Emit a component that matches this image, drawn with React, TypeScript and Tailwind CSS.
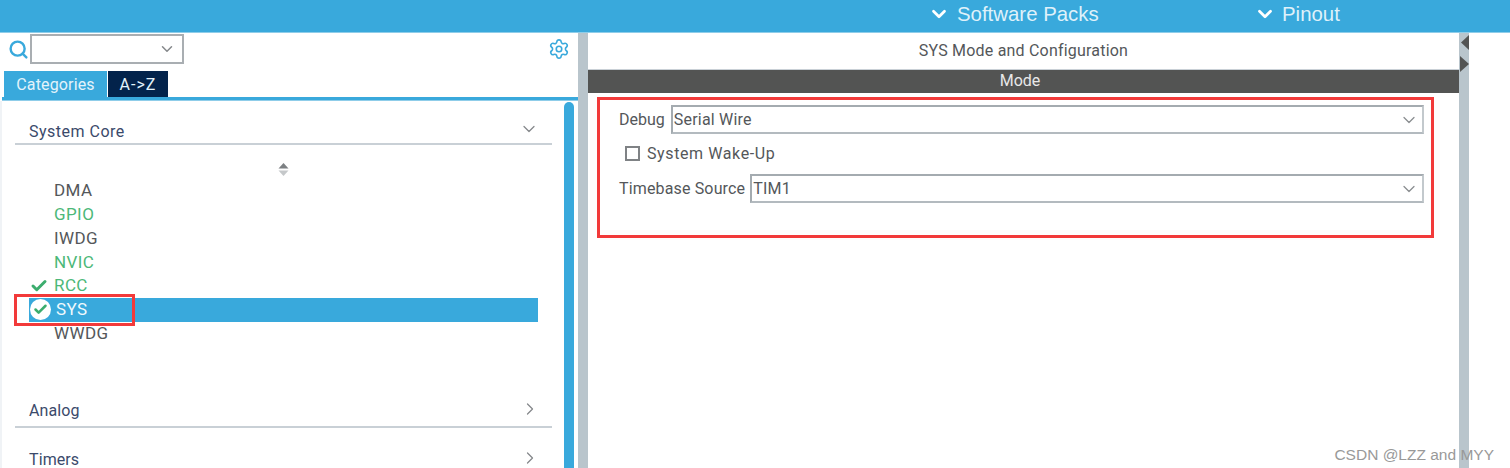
import React from 'react';
import { ChevronDown, ChevronRight, Search, Settings, Check } from 'lucide-react';

const ITEMS = [
  { name: 'DMA', color: 'text-[#54575a]' },
  { name: 'GPIO', color: 'text-[#4cb878]' },
  { name: 'IWDG', color: 'text-[#54575a]' },
  { name: 'NVIC', color: 'text-[#4cb878]' },
  { name: 'RCC', color: 'text-[#4cb878]', check: true },
  { name: 'SYS', selected: true },
  { name: 'WWDG', color: 'text-[#54575a]' },
];

const Select: React.FC<{ value: string }> = ({ value }) => (
  <div className="flex h-[29px] flex-1 items-center justify-between border-2 border-t-[#a4abb0] border-l-[#a4abb0] border-r-[#c3c9cd] border-b-[#b3babf] pl-[1px] pr-[3px]">
    <span className="pt-[1px] text-[16px] tracking-[0.2px] text-[#54575a]">{value}</span>
    <ChevronDown className="h-[20px] w-[20px] text-[#8a8d90]" strokeWidth={1.5} />
  </div>
);

const App: React.FC = () => {
  return (
    <div className="relative flex h-[468px] w-[1510px] flex-col overflow-hidden bg-white font-['Roboto',sans-serif]">
      {/* Top bar */}
      <header className="flex h-[33px] shrink-0 items-center border-b border-[#8fcde9] bg-[#39a9dc] pb-[4px] pl-[928px] font-['Liberation_Sans',sans-serif] text-[20.4px] text-[#dff1fa]">
        <ChevronDown className="h-[22px] w-[22px] text-white" strokeWidth={3} />
        <span className="ml-[7px] w-[297px]">Software Packs</span>
        <ChevronDown className="h-[22px] w-[22px] text-white" strokeWidth={3} />
        <span className="ml-[6px]">Pinout</span>
      </header>

      <div className="flex min-h-0 flex-1">
        {/* Left panel */}
        <aside className="flex w-[578px] shrink-0 flex-col overflow-hidden">
          <div className="flex h-[32px] shrink-0 items-center pl-[8px] pr-[8px]">
            <Search className="h-[21px] w-[21px] text-[#39a9dc]" strokeWidth={2.75} />
            <div className="ml-[1px] flex h-[30px] w-[154px] items-center justify-end border-2 border-[#a9aeb2] pr-[6px]">
              <ChevronDown className="h-[18px] w-[18px] text-[#85888b]" strokeWidth={2} />
            </div>
            <Settings className="ml-auto h-[22px] w-[22px] text-[#39a9dc]" strokeWidth={1.75} />
          </div>

          <div className="ml-[4px] mt-[6px] flex h-[26px] shrink-0 text-[16px] text-[#e3f3fb]">
            <div className="flex w-[103px] items-center justify-center bg-[#39a9dc] pt-[1px] tracking-[0.15px]">Categories</div>
            <div className="ml-[1px] flex w-[60px] items-center justify-center bg-[#03234b] pt-[1px] tracking-[1px]">A-&gt;Z</div>
          </div>
          <div className="ml-[2px] h-[4px] shrink-0 border-b border-[#8fcde9] bg-[#39a9dc]" />

          <div className="flex min-h-0 flex-1 border-l-2 border-[#f0f3f6]">
            <div className="min-w-0 flex-1 pl-[13px] pr-[12px] pt-[17px]">
              <div className="flex h-[27px] items-center justify-between border-b-2 border-[#c9d0d6] pl-[14px] pr-[13px]">
                <span className="pt-[3px] text-[16px] tracking-[0.5px] text-[#3b4a6b]">System Core</span>
                <ChevronDown className="mb-[4px] h-[20px] w-[20px] text-[#85888b]" strokeWidth={1.5} />
              </div>

              <div className="flex h-[32px] items-end justify-center">
                <svg width="11" height="15" viewBox="0 0 11 15">
                  <path d="M5.5 1 L10.5 6.5 H0.5 Z" fill="#7d8083" />
                  <path d="M5.5 14 L10.5 8.5 H0.5 Z" fill="#c5c8ca" />
                </svg>
              </div>

              <ul className="mt-[2px] w-[523px] pl-[14px] text-[17px] tracking-[0.4px]">
                {ITEMS.map((item) =>
                  item.selected ? (
                    <li key={item.name} className="flex h-[24px] items-center bg-[#39a9dc] text-[#f0f9fd]">
                      <span className="ml-[1px] flex h-[21px] w-[21px] items-center justify-center rounded-full bg-white">
                        <Check className="h-[15px] w-[15px] text-[#3cad6e]" strokeWidth={4} />
                      </span>
                      <span className="ml-[5px]">{item.name}</span>
                    </li>
                  ) : (
                    <li key={item.name} className={`flex h-[23.8px] items-center ${item.color}`}>
                      <span className="flex w-[25px] justify-center pr-[5px]">
                        {item.check && <Check className="h-[18px] w-[18px] text-[#3cad6e]" strokeWidth={4} />}
                      </span>
                      <span>{item.name}</span>
                    </li>
                  ),
                )}
              </ul>

              <div className="mt-[50px] flex h-[32px] items-center justify-between border-b-2 border-[#c9d0d6] pl-[14px] pr-[12px]">
                <span className="text-[16px] tracking-[0.1px] text-[#3b4a6b]">Analog</span>
                <ChevronRight className="mb-[4px] h-[20px] w-[20px] text-[#85888b]" strokeWidth={1.5} />
              </div>
              <div className="mt-[16px] flex h-[32px] items-center justify-between pl-[14px] pr-[12px]">
                <span className="text-[16px] tracking-[0.1px] text-[#3b4a6b]">Timers</span>
                <ChevronRight className="mb-[4px] h-[20px] w-[20px] text-[#85888b]" strokeWidth={1.5} />
              </div>
            </div>
            <div className="mr-[4px] mt-[1px] w-[10px] shrink-0 rounded-t-[5px] bg-[#39a9dc]" />
          </div>
        </aside>

        <div className="w-[10px] shrink-0 bg-[#b9c5cc]" />

        {/* Right panel */}
        <main className="flex w-[871px] shrink-0 flex-col">
          <div className="flex h-[36px] shrink-0 items-center justify-center pb-[1px] text-[16px] tracking-[0.2px] text-[#54575a]">
            SYS Mode and Configuration
          </div>
          <div className="flex h-[24px] shrink-0 items-center justify-center border-t border-[#c9d0d6] bg-[#535453] pb-[1px] pr-[7px] text-[16px] text-[#e8e8e8]">
            Mode
          </div>
          <div className="pl-[31px] pr-[35px] pt-[12px] text-[16px] text-[#54575a]">
            <div className="flex items-center">
              <span className="mr-[6px] pt-[1px]">Debug</span>
              <Select value="Serial Wire" />
            </div>
            <div className="mt-[5px] flex h-[29px] items-center pl-[6px]">
              <span className="h-[15px] w-[15px] border-2 border-[#7f8285]" />
              <span className="ml-[7px] tracking-[0.6px]">System Wake-Up</span>
            </div>
            <div className="mt-[6px] flex items-center">
              <span className="mr-[5px] tracking-[0.15px]">Timebase Source</span>
              <Select value="TIM1" />
            </div>
          </div>
        </main>

        <div className="flex w-[10px] shrink-0 flex-col items-end bg-[#b9c5cc]">
          <svg width="9" height="38" viewBox="0 0 9 38" className="mt-[2px]">
            <path d="M9 0 V15 L1 7.5 Z" fill="#535453" />
            <path d="M0 21 V37 L9 29 Z" fill="#535453" />
          </svg>
        </div>
      </div>

      {/* Red annotation boxes */}
      <div className="absolute left-[14px] top-[294px] h-[32px] w-[121px] border-[3px] border-[#f23a3a]" />
      <div className="absolute left-[597px] top-[97px] h-[141px] w-[837px] border-[3px] border-[#f23a3a]" />

      {/* Watermark */}
      <span className="absolute right-[16px] top-[443px] font-['Liberation_Sans',sans-serif] text-[15.5px] text-[#999999]">
        CSDN @LZZ and MYY
      </span>
    </div>
  );
};

export default App;
